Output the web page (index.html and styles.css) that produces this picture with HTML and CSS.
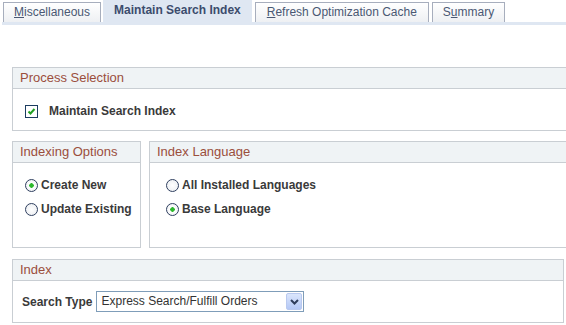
FILE: index.html
```html
<!DOCTYPE html>
<html lang="en">
  <head>
    <meta charset="UTF-8" />
    <title>Maintain Search Index</title>
    <link rel="stylesheet" href="styles.css">
  </head>
  <body>
    <!-- Tabs -->
    <div class="tabs">
      <a class="tab"><u>M</u>iscellaneous</a>
      <a class="tab tab-active">Maintain Search Index</a>
      <a class="tab"><u>R</u>efresh Optimization Cache</a>
      <a class="tab">S<u>u</u>mmary</a>
    </div>
    <div class="tab-strip"></div>

    <div class="page">
      <!-- Process Selection -->
      <div class="group group-wide">
        <div class="group-head">Process Selection</div>
        <div class="group-body process-body">
          <label class="field-check">
            <input type="checkbox" checked />
            <span>Maintain Search Index</span>
          </label>
        </div>
      </div>

      <div class="group-row">
        <!-- Indexing Options -->
        <div class="group group-small">
          <div class="group-head">Indexing Options</div>
          <div class="group-body radio-body">
            <label class="field-radio">
              <input type="radio" name="opt" checked />
              <span>Create New</span>
            </label>
            <label class="field-radio">
              <input type="radio" name="opt" />
              <span>Update Existing</span>
            </label>
          </div>
        </div>

        <!-- Index Language -->
        <div class="group group-fill">
          <div class="group-head">Index Language</div>
          <div class="group-body radio-body lang-body">
            <label class="field-radio">
              <input type="radio" name="lang" />
              <span>All Installed Languages</span>
            </label>
            <label class="field-radio">
              <input type="radio" name="lang" checked />
              <span>Base Language</span>
            </label>
          </div>
        </div>
      </div>

      <!-- Index -->
      <div class="group group-index">
        <div class="group-head">Index</div>
        <div class="group-body index-body">
          <span class="field-label">Search Type</span>
          <div class="dropdown">
            <span class="dropdown-value">Express Search/Fulfill Orders</span>
            <span class="dropdown-btn">
              <svg width="9" height="6" viewBox="0 0 9 6">
                <path d="M1 1 L4.5 4.5 L8 1" fill="none" stroke="#2e3d5c" stroke-width="2" />
              </svg>
            </span>
          </div>
        </div>
      </div>
    </div>
  </body>
</html>
```

FILE: styles.css
```css
/* Base */
body {
  margin: 0;
  font-family: "Liberation Sans", Arial, sans-serif;
  font-size: 12px;
  color: #333;
  background: #fff;
}

/* Tabs */
.tabs {
  display: flex;
  align-items: flex-end;
  height: 22px;
  padding-left: 3px;
}

.tab {
  box-sizing: border-box;
  height: 20px;
  line-height: 19px;
  padding: 0 10px;
  margin-right: 2px;
  border: 1px solid #a7aebd;
  border-bottom: none;
  background: linear-gradient(#ffffff, #eef0f3);
  color: #4a5873;
  font-size: 12px;
  white-space: nowrap;
}

.tab:nth-child(3) {
  padding: 0 11px;
  margin-left: 1px;
  margin-right: 3px;
}

.tab-active {
  height: 23px;
  line-height: 21px;
  padding: 0 11px;
  margin-bottom: -1px;
  border: none;
  background: #dfe7f2;
  color: #3c4c6d;
  font-weight: bold;
}

.tab-strip {
  height: 3px;
  margin-left: 2px;
  background: #dfe7f2;
}

/* Group boxes */
.page {
  width: 554px;
  padding: 42px 0 0 12px;
  overflow: hidden;
}

.group {
  box-sizing: border-box;
  flex: none;
  border: 1px solid #c9ced3;
  background: #fff;
}

.group-wide {
  width: 600px;
  height: 64px;
}

.group-head {
  height: 20px;
  line-height: 20px;
  padding-left: 7px;
  background: #eff3f5;
  border-bottom: 1px solid #c9ced3;
  color: #9b4e3c;
  font-size: 13px;
  white-space: nowrap;
}

.process-body {
  padding: 15px 0 0 12px;
}

.group-row {
  display: flex;
  gap: 8px;
  margin-top: 10px;
}

.group-small {
  width: 129px;
  height: 107px;
}

.group-fill {
  width: 460px;
  height: 107px;
}

.group-index {
  width: 552px;
  height: 64px;
  margin-top: 11px;
}

/* Fields */
.field-check,
.field-radio {
  display: flex;
  align-items: center;
  height: 14px;
  font-weight: bold;
  color: #3a3a3a;
  white-space: nowrap;
}

.field-check input {
  appearance: none;
  box-sizing: border-box;
  width: 13px;
  height: 13px;
  margin: 0 11px 0 0;
  border: 1px solid #1c3c60;
  background: #fff url("data:image/svg+xml,%3Csvg xmlns='http://www.w3.org/2000/svg' width='11' height='11'%3E%3Cpath d='M2.5 5.5 L4.5 7.5 L8.5 3' fill='none' stroke='%2322a022' stroke-width='2'/%3E%3C/svg%3E") center no-repeat;
}

.radio-body {
  display: flex;
  flex-direction: column;
  gap: 10px;
  padding: 15px 0 0 12px;
}

.lang-body {
  padding-left: 16px;
}

.field-radio input {
  appearance: none;
  box-sizing: border-box;
  width: 13px;
  height: 13px;
  margin: 0 3px 0 0;
  border: 1px solid #2f3f5f;
  border-radius: 50%;
  background: radial-gradient(circle, #fff 0, #e8ebef 100%);
}

.field-radio input:checked {
  background: radial-gradient(circle, #2eb82e 0, #2eb82e 2px, #fff 2.5px, #e8ebef 100%);
}

/* Index row */
.index-body {
  display: flex;
  align-items: center;
  gap: 4px;
  padding: 10px 0 0 9px;
}

.field-label {
  font-weight: bold;
  color: #3a3a3a;
}

.dropdown {
  box-sizing: border-box;
  display: flex;
  align-items: center;
  justify-content: space-between;
  width: 208px;
  height: 21px;
  padding: 0 1px 0 4px;
  border: 1px solid #7f9db9;
  color: #333;
}

.dropdown-value {
  line-height: 19px;
}

.dropdown-btn {
  box-sizing: border-box;
  display: flex;
  align-items: center;
  justify-content: center;
  width: 16px;
  height: 17px;
  border: 1px solid #b9c9ef;
  border-radius: 2px;
  background: linear-gradient(#dbe6fc, #b4c8f6);
}
```
